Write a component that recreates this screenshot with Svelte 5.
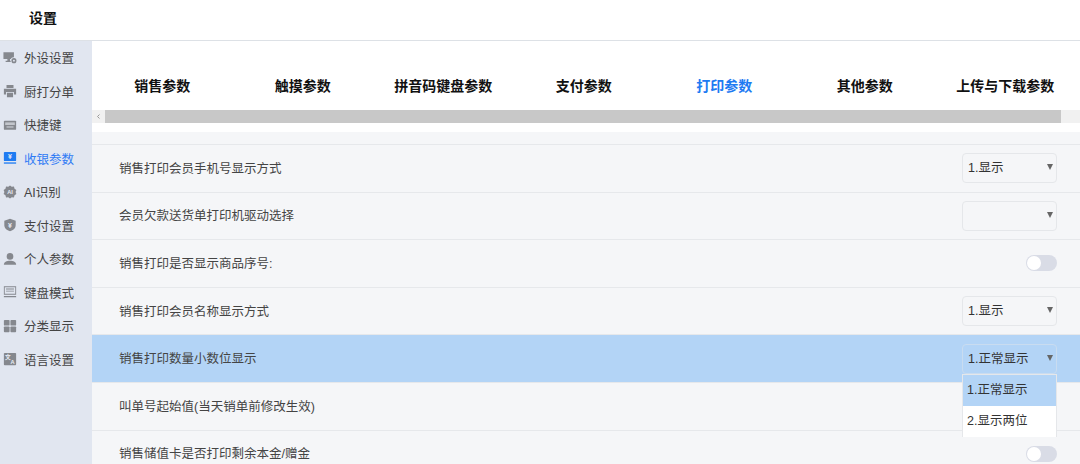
<script>
    let navItems = [
        { key: "device", label: "外设设置" },
        { key: "print", label: "厨打分单" },
        { key: "keys", label: "快捷键" },
        { key: "cash", label: "收银参数", active: true },
        { key: "ai", label: "AI识别" },
        { key: "pay", label: "支付设置" },
        { key: "user", label: "个人参数" },
        { key: "board", label: "键盘模式" },
        { key: "grid", label: "分类显示" },
        { key: "lang", label: "语言设置" },
    ];

    let tabs = ["销售参数", "触摸参数", "拼音码键盘参数", "支付参数", "打印参数", "其他参数", "上传与下载参数"];
    let activeTab = "打印参数";

    let rows = [
        { label: "销售打印会员手机号显示方式", type: "select", value: "1.显示" },
        { label: "会员欠款送货单打印机驱动选择", type: "select", value: "" },
        { label: "销售打印是否显示商品序号:", type: "toggle" },
        { label: "销售打印会员名称显示方式", type: "select", value: "1.显示" },
        { label: "销售打印数量小数位显示", type: "select", value: "1.正常显示", open: true },
        { label: "叫单号起始值(当天销单前修改生效)", type: "none" },
        { label: "销售储值卡是否打印剩余本金/赠金", type: "toggle" },
    ];
</script>

<div class="page">
    <header class="top">设置</header>
    <div class="body">
        <nav class="side">
            {#each navItems as item}
                <div class="navItem" class:active={item.active}>
                    <svg class="icon" viewBox="0 0 16 16">
                        {#if item.key === "device"}
                            <path d="M.5 1.500h12V9H8v2h2v1.500H3V11h2V9H.5z" />
                            <circle cx="12.500" cy="11" r="3.800" class="cut" />
                            <circle cx="12.500" cy="11" r="2" class="ring" />
                        {:else if item.key === "print"}
                            <path d="M4 1h8v3.500H4zM1 5.500h14v6.500h-2.500V9h-9v3H1zM4.500 10h7v5h-7z" />
                        {:else if item.key === "keys"}
                            <rect x="1" y="3" width="14" height="10.500" rx="1" />
                            <rect x="2.500" y="5" width="11" height="3" class="soft" />
                            <rect x="4" y="9.500" width="8" height="1.500" class="soft" />
                        {:else if item.key === "cash"}
                            <rect x="1" y="1" width="14" height="10.500" rx="1" />
                            <rect x="1" y="13" width="14" height="1.500" />
                            <text x="8" y="9" class="mark">¥</text>
                        {:else if item.key === "ai"}
                            <path d="M8 .5l2 1.600 2.500-.3.700 2.400 2.100 1.400-.9 2.400.9 2.400-2.100 1.400-.7 2.400-2.500-.3L8 15.500l-2-1.600-2.500.3-.7-2.400L.7 10.400l.9-2.400-.9-2.400 2.100-1.400.7-2.400 2.500.3z" />
                            <text x="8" y="10.500" class="mark small">AI</text>
                        {:else if item.key === "pay"}
                            <path d="M8 .8l6.500 2.200v5c0 3.700-2.800 6-6.500 7.200C4.300 14 1.500 11.700 1.500 8V3z" />
                            <text x="8" y="11" class="mark">¥</text>
                        {:else if item.key === "user"}
                            <circle cx="8" cy="5" r="3.800" />
                            <path d="M1 14.500c0-3 3-4.500 7-4.500s7 1.500 7 4.500z" />
                        {:else if item.key === "board"}
                            <path fill-rule="evenodd" d="M1 1.500h14v9.500H1zM2 2.500v7.500h12V2.500z" />
                            <path d="M3.500 4h9v1h-9zM3.500 6.500h9v1h-9zM1 12.500h14V14H1z" />
                        {:else if item.key === "grid"}
                            <rect x="1" y="1" width="6.500" height="6.500" rx="1" />
                            <rect x="8.500" y="1" width="6.500" height="6.500" rx="1" />
                            <rect x="1" y="8.500" width="6.500" height="6.500" rx="1" />
                            <rect x="8.500" y="8.500" width="6.500" height="6.500" rx="1" />
                        {:else}
                            <rect x="1" y="1" width="14" height="14" rx="1" />
                            <text x="5.500" y="8.500" class="mark small">文</text>
                            <text x="11" y="13.500" class="mark small">A</text>
                        {/if}
                    </svg>
                    <span>{item.label}</span>
                </div>
            {/each}
        </nav>

        <main class="content">
            <div class="tabs">
                {#each tabs as tab}
                    <div class="tab" class:on={tab === activeTab}>{tab}</div>
                {/each}
            </div>
            <div class="scrollbar">
                <svg class="arrow" viewBox="0 0 13 13" width="13" height="13">
                    <path d="M7.500 4.500L5.500 6.500l2 2" fill="none" stroke="#999" stroke-width="1" />
                </svg>
                <div class="thumb"></div>
            </div>
            <div class="gap"></div>
            <div class="list">
                <div class="listTop"></div>
                {#each rows as row}
                    <div class="row" class:hl={row.open}>
                        <span class="label">{row.label}</span>
                        {#if row.type === "select"}
                            <div class="select">
                                <span>{row.value}</span>
                                <i class="caret"></i>
                                {#if row.open}
                                    <div class="menu">
                                        <div class="opt sel">1.正常显示</div>
                                        <div class="opt">2.显示两位</div>
                                    </div>
                                {/if}
                            </div>
                        {:else if row.type === "toggle"}
                            <div class="toggle"><i></i></div>
                        {/if}
                    </div>
                {/each}
            </div>
        </main>
    </div>
</div>

<style>
    :global(body) {
        margin: 0;
        overflow: hidden;
    }

    .page {
        width: 1080px;
        height: 464px;
        overflow: hidden;
        background: #fff;
        font-family: "Liberation Sans", "Noto Sans CJK SC", sans-serif;
        color: #333;
    }

    .top {
        height: 40px;
        border-bottom: 1px solid #dde1e6;
        padding-left: 29px;
        line-height: 37px;
        font-size: 14px;
        font-weight: bold;
        color: #111;
    }

    .body {
        display: flex;
        height: 423px;
    }

    .side {
        width: 92px;
        flex: none;
        background: #e1e6f0;
    }

    .navItem {
        height: 33.5px;
        display: flex;
        align-items: center;
        gap: 7.5px;
        padding-left: 2.5px;
        font-size: 12.5px;
        color: #444;
    }

    .navItem.active {
        color: #2f7bf5;
    }

    .icon {
        fill: #85888e;
        flex: none;
        width: 14px;
        height: 14px;
    }

    .active .icon {
        fill: #1e7bf2;
    }

    .icon .cut {
        fill: #e1e6f0;
    }

    .icon .ring {
        fill: none;
        stroke: #85888e;
        stroke-width: 1.8;
    }

    .icon .soft {
        fill: #c3c6cc;
    }

    .icon .mark {
        fill: #e8ecf4;
        font-size: 8px;
        font-weight: bold;
        text-anchor: middle;
    }

    .icon .mark.small {
        font-size: 6.5px;
    }

    .content {
        flex: 1;
        min-width: 0;
        height: 423px;
        overflow: hidden;
    }

    .tabs {
        display: flex;
        height: 69px;
    }

    .tab {
        width: 140.5px;
        flex: none;
        text-align: center;
        padding-top: 35px;
        line-height: 20px;
        font-size: 14px;
        font-weight: bold;
        color: #111;
        white-space: nowrap;
    }

    .tab.on {
        color: #1e7bf2;
    }

    .scrollbar {
        height: 13px;
        background: #f1f1f1;
        display: flex;
        padding-right: 19px;
    }

    .arrow {
        flex: none;
    }

    .thumb {
        flex: 1;
        background: #c8c8c8;
    }

    .gap {
        height: 9px;
    }

    .list {
        background: #f5f6f8;
    }

    .listTop {
        height: 12px;
    }

    .row {
        height: 47.6px;
        box-sizing: border-box;
        border-top: 1px solid #e6e8eb;
        display: flex;
        align-items: center;
        justify-content: space-between;
        padding: 0 23px 0 27px;
        font-size: 12.5px;
        color: #444;
    }

    .label {
        padding-bottom: 2px;
    }

    .row.hl {
        background: #b3d4f6;
    }

    .select {
        position: relative;
        width: 95px;
        height: 30px;
        box-sizing: border-box;
        border: 1px solid #e5e7ea;
        border-radius: 4px;
        padding-left: 5px;
        line-height: 29px;
        color: #333;
    }

    .hl .select {
        border-color: #c9dcf0;
    }

    .caret {
        position: absolute;
        right: 3px;
        top: 10px;
        width: 0;
        height: 0;
        border-left: 3px solid transparent;
        border-right: 3px solid transparent;
        border-top: 6px solid #666;
    }

    .menu {
        position: absolute;
        left: -1px;
        top: 29px;
        width: 93px;
        height: 62px;
        border: 1px solid #e5e7ea;
        border-bottom: none;
        background: #fff;
        z-index: 2;
    }

    .opt {
        height: 31px;
        line-height: 31px;
        padding-left: 4px;
        color: #333;
    }

    .opt.sel {
        background: #b3d4f6;
    }

    .toggle {
        width: 31px;
        height: 16px;
        border-radius: 8px;
        background: #d9dce6;
        position: relative;
    }

    .toggle i {
        position: absolute;
        left: 1px;
        top: 1px;
        width: 14px;
        height: 14px;
        border-radius: 50%;
        background: #fff;
    }
</style>
